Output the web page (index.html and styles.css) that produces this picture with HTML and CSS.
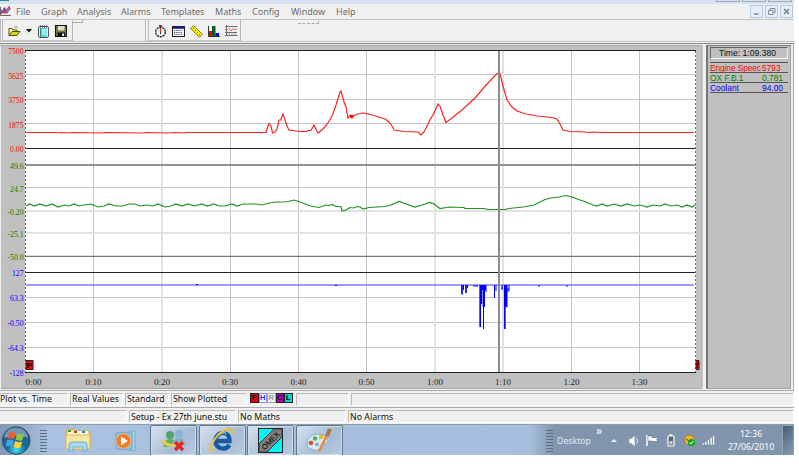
FILE: index.html
```html
<!DOCTYPE html>
<html lang="en">
<head>
    <meta charset="UTF-8">
    <title>Plot vs. Time</title>
    <link rel="stylesheet" href="styles.css">
</head>
<body>
    <div class="screen">
        <div class="titlebar"><i></i><span></span><span></span><span></span></div>
        <div class="menubar">
            <svg class="app-icon" width="12" height="12" viewBox="0 0 12 12">
                <path d="M.5 2V10.500H11" fill="none" stroke="#666"/>
                <path d="M1 9L4 4L5 8L9 2L10 5" fill="none" stroke="#e22" stroke-width="1.300"/>
                <path d="M1 5L3 8L5 3L7 8L10 3" fill="none" stroke="#55c" stroke-width="1.100"/>
            </svg>
            <ul class="menu">
                <li class="m1">File</li>
                <li class="m2">Graph</li>
                <li class="m3">Analysis</li>
                <li class="m4">Alarms</li>
                <li class="m5">Templates</li>
                <li class="m6">Maths</li>
                <li class="m7">Config</li>
                <li class="m8">Window</li>
                <li class="m9">Help</li>
            </ul>
            <div class="win-buttons">
                <svg width="13" height="13" viewBox="0 0 13 13"><path d="M4 9H8.500" stroke="#7d8894" stroke-width="1.500"/></svg>
                <svg width="13" height="13" viewBox="0 0 13 13"><path d="M5 5V3.500H10V7.500H8.500M3.500 5.500H8V9.500H3.500Z" fill="none" stroke="#7d8894"/></svg>
                <svg width="13" height="13" viewBox="0 0 13 13"><path d="M4 4L9 9M9 4L4 9" stroke="#7d8894" stroke-width="1.700"/></svg>
            </div>
        </div>

        <div class="toolbar">
            <div class="tools tools-file">
                <svg width="13" height="13" viewBox="0 0 13 13"><path d="M1 10V3.500H4L5 5H9V6.500" fill="#ffffa0" stroke="#554f10"/><path d="M1 10.500L4 6.500H12L9 10.500Z" fill="#d8d820" stroke="#554f10"/><path d="M6 2.500Q9 .5 10 3" fill="none" stroke="#888"/></svg>
                <svg class="drop" width="6" height="4" viewBox="0 0 6 4"><path d="M0 0H6L3 3.500Z" fill="#111"/></svg>
                <svg width="13" height="13" viewBox="0 0 13 13"><rect x="1.500" y="1.500" width="10" height="11" rx="1.500" fill="#e8f4f4" stroke="#555"/><rect x="3.500" y="3" width="6" height="9" fill="#40d8e0"/><path d="M3 1.500H10" stroke="#333" stroke-dasharray="1 1" stroke-width="2"/><path d="M5 5H9M5 7H8M5 9H9" stroke="#fff"/><path d="M3.500 3V12" stroke="#268a90"/></svg>
                <svg width="12" height="12" viewBox="0 0 12 12"><rect x=".5" y=".5" width="11" height="11" fill="#77782a" stroke="#111"/><rect x="3" y="1" width="6.500" height="4.500" fill="#ddd"/><rect x="2.500" y="7.500" width="7.500" height="4" fill="#111"/><rect x="7" y="8.500" width="2" height="2.500" fill="#ddd"/></svg>
            </div>
            <div class="nub nub-a"></div>
            <div class="tools tools-view">
                <svg width="13" height="13" viewBox="0 0 13 13"><path d="M5 1H8" stroke="#222" stroke-width="1.500"/><circle cx="6.500" cy="7" r="4.800" fill="#f4f4f4" stroke="#222" stroke-width="1.400" stroke-dasharray="2.200 .8"/><path d="M6.500 3V7" stroke="#c33" stroke-width="1.300"/><path d="M6.500 7V9" stroke="#333"/></svg>
                <svg width="13" height="11" viewBox="0 0 13 11"><rect x=".5" y=".5" width="12" height="10" fill="#fff" stroke="#222"/><path d="M1 1.800H12" stroke="#1717a8" stroke-width="2"/><path d="M2 4.500H11M2 6.500H11M2 8.500H11" stroke="#4b4b72" stroke-dasharray="1.300 .9"/></svg>
                <svg width="13" height="13" viewBox="0 0 13 13"><path d="M.7 3.500L3.500.7L12.300 9.300L9.500 12.300Z" fill="#fff000" stroke="#77760a"/><path d="M4 3L3 4M6 5L5 6M8 7L7 8M10 9L9 10" stroke="#77760a"/></svg>
                <svg width="12" height="11" viewBox="0 0 12 11"><path d="M.5 0V10.500H12" fill="none" stroke="#333"/><path d="M1 5H4V10H1Z" fill="#f00"/><path d="M4 0H7.500V10H4Z" fill="#075c20"/><path d="M7.500 7H11V10H7.500Z" fill="#00f"/></svg>
                <svg width="13" height="12" viewBox="0 0 13 12"><path d="M1.500 0V11M0 1.500H12.500M0 4.500H2M0 7.500H12M0 10.500H12.500" stroke="#6b6b6b" fill="none"/><path d="M2 5.500L4 3.500L6 6L8 3.500L10 5L12 3.500" fill="none" stroke="#e46868"/><path d="M3 9H11" stroke="#aaa" stroke-dasharray="2 1"/></svg>
            </div>
            <div class="nub nub-b"></div>
        </div>

        <div class="main">
            <!-- viewBox starts at the top of the graph area -->
            <svg class="graph" width="703" height="345" viewBox="0 44 703 345">
                <rect x="1" y="46" width="701" height="343" fill="#c0c0c0"/>
                <path d="M0 45.500H702V388.500H1" class="edge"/>
                <rect x="25" y="50" width="671" height="323" fill="#fff"/>

                <g class="grid">
                    <path d="M26 74.500H696M26 99.500H696M26 123.500H696M26 187.500H696M26 297.500H696M26 322.500H696M26 347.500H696"/>
                    <path d="M93.500 51V372M230.500 51V372M298.500 51V372M366.500 51V372M571.500 51V372M639.500 51V372"/>
                </g>
                <path class="grid-soft" d="M162 51V372M435 51V372M503 51V372M26 211H696M26 233H696"/>
                <path class="axis" d="M25 50.500H696M25 148.500H696M25 272.500H696M25 372.500H696"/>
                <path class="axis axis-soft" d="M25 165H696"/>
                <path class="axis axis-mid" d="M25 256.300H696"/>
                <path class="marks" d="M25.500 51V372M695.500 51V372"/>

                <polyline class="rpm" points="26,132.500 58,132.500 60,133 64,132.500 69,133 72,132.500 102,133 105,132.500 143,133 146,132.500 168,133 175,132.500 184,133 187,132.500 266,132.500 267,129 269,123.500 271,126 272.500,133 275,132 277,129 278,125 279,120 281,120 282,116 283,114 285,120 287,126 289,130 300,131.500 307,131.500 308,130.500 311,130.500 314,125 316,129 318,133 323,129 328,123 333,114 336,105 340,92 341,91 344,102 346,107 348,118 350,115.500 352,118 354,115.500 358,114 363,113 366,113.500 374,115.500 385,119 389,122 392,126 394,130 404,131.500 418,132 421,135 424,132 430,120 434,113 438,104 440,106 443,115 446,122.500 450,119.500 462,110 475,98 487,84 497,73.500 500,73.500 503,86 507,100 512,107 517,111 526,114 537,116 552,117.500 557,119 560,124 563,130 570,131.500 585,132 589,132.500 592,132 602,132.500 694,132.500"/>
                <path d="M350 114.500L354 115.500V116.500L350 118Z" fill="#f00"/>
                <polyline class="lambda" points="26,206 30,204 34,206 40,204 46,206 52,204 58,207 64,205 69,206 74,204 79,206 84,205 91,204 98,207 104,206 109,204 116,206 123,206 129,204 135,204 140,206 147,205 153,206 158,204 165,207 171,206 176,204 182,206 188,204 194,206 202,204 207,206 214,204 219,206 225,206 232,204 237,206 243,204 250,204 256,204 262,205 269,203 276,202 283,202 288,201.500 294,200 300,202 305,204 311,206 319,207.500 326,205 329,205.500 332,204.500 336,206.500 341,206.500 342,211 346,210 350,207.500 354,208 357,206.500 360,207 363,209 369,207.500 385,206.500 391,205 399,201.500 406,204 415,207 422,205 430,202.500 434,204 440,208.500 449,207 464,207.500 465,208.500 484,208.500 488,209.500 505,209.500 509,208.500 523,207 534,205 540,202 545,199.500 551,198 559,197 566,195.500 572,197 580,200 586,202 593,205 597,206 602,204 607,206 614,204 621,206 627,204 634,206 640,205 647,207 653,205 660,206 665,204 671,206 677,205 682,207 687,205 692,207 695,205"/>
                <path class="coolant" d="M26 285H694"/>
                <g class="drops">
                    <path d="M462 285V294.500M466 285V293M480.200 285V327M504.800 285V329" stroke-width="1.700"/>
                    <path d="M463.500 285V290M467.500 285V288M483.500 285V329M486 285V292M494.500 285V298M496 285V291M502 285V290M509 285V291"/>
                    <path d="M481 285H486V290H485V307H483L482 304H481ZM505 285H507.500V307H505Z" fill="#00f" stroke="none"/>
                    <path d="M196 284.500H198M335 285.500H337M473 286H478M538 286H540M566 286H568M501 288H503M508 288V292"/>
                </g>
                <path d="M482.500 290V305" stroke="#c9c9ff" stroke-width=".7"/>
                <path class="cursor" d="M499 51V372"/>

                <rect x="26" y="360.500" width="7" height="9" fill="#f00" stroke="#222"/>
                <text class="flag" x="26.500" y="368">P</text>
                <path d="M696 360.500H699V369.500H696Z" fill="#f00" stroke="#222"/>
                <path d="M697.500 368V363H699" fill="none" stroke="#200"/>

                <g class="scale red">
                    <text x="23.500" y="54">7500</text>
                    <text x="23.500" y="78.500">5625</text>
                    <text x="23.500" y="103">3750</text>
                    <text x="23.500" y="128">1875</text>
                    <text x="23.500" y="152">0.00</text>
                </g>
                <g class="scale green">
                    <text x="23.500" y="169">49.6</text>
                    <text x="23.500" y="192">24.7</text>
                    <text x="23.500" y="214.500">-0.20</text>
                    <text x="23.500" y="237">-25.1</text>
                    <text x="23.500" y="260">-50.0</text>
                </g>
                <g class="scale blue">
                    <text x="23.500" y="276">127</text>
                    <text x="23.500" y="301">63.3</text>
                    <text x="23.500" y="326">-0.50</text>
                    <text x="23.500" y="351">-64.3</text>
                    <text x="23.500" y="376">-128</text>
                </g>
                <g class="times">
                    <text x="33.500" y="384.500">0:00</text>
                    <text x="93.500" y="384.500">0:10</text>
                    <text x="162" y="384.500">0:20</text>
                    <text x="230" y="384.500">0:30</text>
                    <text x="298.500" y="384.500">0:40</text>
                    <text x="366.500" y="384.500">0:50</text>
                    <text x="435" y="384.500">1:00</text>
                    <text x="503" y="384.500">1:10</text>
                    <text x="571.500" y="384.500">1:20</text>
                    <text x="639.500" y="384.500">1:30</text>
                </g>
            </svg>

            <div class="values">
                <div class="time">Time: 1:09.380</div>
                <div class="row red"><span>Engine Speec</span><b>5793</b></div>
                <div class="row green"><span>OX F.B.1</span><b>0.781</b></div>
                <div class="row blue"><span>Coolant</span><b>94.00</b></div>
            </div>
        </div>

        <div class="status">
            <div class="cell s1">Plot vs. Time</div>
            <div class="cell s2">Real Values</div>
            <div class="cell s3">Standard</div>
            <div class="cell s4">Show Plotted</div>
            <div class="keys"><i class="k-p">P</i><i class="k-h">H</i><i class="k-r">R</i><i class="k-c">C</i><i class="k-l">L</i></div>
            <div class="cell s5"></div>
            <div class="cell s6"></div>
        </div>
        <div class="status status-low">
            <div class="cell t1"></div>
            <div class="cell t2">Setup - Ex 27th june.stu</div>
            <div class="cell t3">No Maths</div>
            <div class="cell t4">No Alarms</div>
        </div>

        <div class="taskbar">
            <svg class="start" width="32" height="31" viewBox="0 0 32 31">
                <defs>
                    <radialGradient id="orb" cx=".5" cy=".85" r=".8">
                        <stop offset="0" stop-color="#3fe0f4"/>
                        <stop offset=".4" stop-color="#1a6f9f"/>
                        <stop offset="1" stop-color="#2c5278"/>
                    </radialGradient>
                </defs>
                <circle cx="16.200" cy="15.500" r="13.800" fill="url(#orb)" stroke="#294e70"/>
                <path d="M4 13Q5 3 16 2.500Q27 3 28 13Q16 8 4 13Z" fill="#b5cbdc" opacity=".55"/>
                <path d="M9 8Q12 6 15.500 8L14 14Q11 12.500 7.500 14Z" fill="#f0602a"/>
                <path d="M17 8.500Q20 10.500 24 8.500L22.500 15Q19 16.500 15.500 14.500Z" fill="#8cc63e"/>
                <path d="M7 15.500Q10 13.500 13.700 15.500L12 21.500Q9 20 5.700 21.500Z" fill="#4aa0e8"/>
                <path d="M15.200 16Q18.500 18 22 16.500L20.500 22.500Q17 24 13.500 22Z" fill="#ffd034"/>
            </svg>
            <div class="grip"></div>
            <svg class="explorer" width="26" height="25" viewBox="0 0 26 25">
                <path d="M1 3L2 1H9L10 3H24L25 5V19H1Z" fill="#ead47e" stroke="#c9aa50"/>
                <path d="M3 3H23V8H3Z" fill="#fff6cc"/>
                <path d="M3 3H6" stroke="#2a9a3a" stroke-width="2"/><path d="M9 4H12" stroke="#d8362c" stroke-width="2"/><path d="M17 4H20" stroke="#3279cc" stroke-width="2"/>
                <path d="M1 7H25V21H1Z" fill="#f7e7a0" stroke="#d5ba63"/>
                <path d="M4 23V17Q4 14 7 14H19Q22 14 22 17V23H18V19H8V23Z" fill="#a7d9f2" stroke="#6eabcf"/>
            </svg>
            <svg class="player" width="24" height="22" viewBox="0 0 24 22">
                <path d="M6 3L20 1V21L6 19Z" fill="#a9d2e9" stroke="#7bb0cf"/>
                <path d="M1 3H17V19H1Z" fill="#8ec4e4" stroke="#69a4c9"/>
                <circle cx="8.500" cy="11" r="7.300" fill="#f27a20" stroke="#f5b27c"/>
                <path d="M6 6.500L13 11L6 15.500Z" fill="#fff"/>
            </svg>
            <div class="task">
                <svg width="26" height="24" viewBox="0 0 26 24">
                    <circle cx="9" cy="6" r="4" fill="#54a565"/><path d="M3 18Q2 10 9 10Q16 10 15 18Z" fill="#65b15f"/>
                    <circle cx="18" cy="5" r="4" fill="#83b5d4"/><path d="M12 17Q11 9 18 9Q25 9 24 17Z" fill="#82b1d0"/>
                    <path d="M1 11Q9 21 23 13" fill="none" stroke="#e8c756" stroke-width="3"/>
                    <path d="M14 13L22 21M22 13L14 21" stroke="#df2626" stroke-width="3.200"/>
                </svg>
            </div>
            <div class="task">
                <svg width="26" height="25" viewBox="0 0 26 25">
                    <path d="M20.500 17Q17 22 11 20Q5 17 6.500 11Q9 4.500 15 5Q21 6 20.500 13H8" fill="none" stroke="#165aa7" stroke-width="4.300"/>
                    <path d="M8 8Q12 3 17 5.500" fill="none" stroke="#56b7ef" stroke-width="1.800"/>
                    <path d="M5 22Q-1 25 3 16Q8 5 19 1Q25 0 22 7" fill="none" stroke="#edbe35" stroke-width="2"/>
                </svg>
            </div>
            <div class="task">
                <svg width="25" height="25" viewBox="0 0 25 25">
                    <rect x=".5" y=".5" width="24" height="24" fill="#00f4fa" stroke="#222"/>
                    <path d="M1 16L16 1H24V9L9 24H1Z" fill="#808080" stroke="#333"/>
                    <text class="omex" x="-11" y="3" transform="translate(12.500 12.500) rotate(-45)" textLength="22" lengthAdjust="spacingAndGlyphs">OMEX</text>
                </svg>
            </div>
            <div class="task">
                <svg width="26" height="25" viewBox="0 0 26 25">
                    <path d="M1 16Q1 7 11 6Q20 6 22 13Q21 16 17 16Q14 17 16 20Q15 23 9 22Q1 21 1 16Z" fill="#d8e9f4" stroke="#86abc5"/>
                    <circle cx="5" cy="15" r="2.300" fill="#d84b3a"/><circle cx="9" cy="10.500" r="2.200" fill="#4ab558"/><circle cx="15" cy="9" r="2.200" fill="#e8b82b"/><circle cx="11" cy="16.500" r="1.800" fill="#6eaadb"/>
                    <path d="M13 23L21 7" stroke="#e28b32" stroke-width="2.500"/><path d="M21 8L24 1" stroke="#a9764b" stroke-width="4"/>
                </svg>
            </div>
            <div class="tray">
                <div class="grip"></div>
                <span class="desktop">Desktop</span>
                <span class="more">»</span>
                <svg class="icons" width="105" height="16" viewBox="0 0 105 16">
                    <path d="M1 9L4 6L7 9Z" fill="#eef3f8"/>
                    <path d="M19.500 6H21.500L24.500 3V13L21.500 10H19.500Z" fill="#fff" stroke="#dfe5ec" stroke-width=".5"/>
                    <path d="M26.500 5Q29 8 26.500 11" fill="none" stroke="#d4dde8"/>
                    <path d="M37 2V13" stroke="#fff" stroke-width="1.500"/><path d="M38 3H42V4.500H48.500L46.500 6.500L48 8.500H42V8H38Z" fill="#fff" stroke="#4a596b" stroke-width=".5"/>
                    <rect x="58" y="3" width="6" height="10" rx="1" fill="#59687a" stroke="#fff" stroke-width="1.200"/><path d="M59.500 2H62.500" stroke="#fff" stroke-width="1.500"/><path d="M61 8V11.500" stroke="#c0cbd6" stroke-width="3"/>
                    <circle cx="79.500" cy="7" r="5" fill="#f3b520" stroke="#9c7820" stroke-width=".7"/><path d="M76 6L79 8L82 6" stroke="#604918" fill="none"/><circle cx="81.500" cy="9.500" r="3.600" fill="#12a52a"/><path d="M79.500 9.500L81 11L83.500 8" fill="none" stroke="#fff"/>
                    <path d="M92 10H94V12H92ZM94.700 8.500H96.700V12H94.700ZM97.400 6.500H99.400V12H97.400ZM100.100 4.500H102.100V12H100.100ZM102.600 2.500H104.600V12H102.600Z" fill="#f5f8fb" stroke="#6d7b8c" stroke-width=".4"/>
                </svg>
                <div class="clock">12:36<br>27/06/2010</div>
                <div class="peek"></div>
            </div>
        </div>
    </div>
</body>
</html>
```

FILE: styles.css
```css
* {
    box-sizing: border-box;
}
body {
    margin: 0;
    background: #fff;
    font-family: "Noto Sans", "Open Sans", sans-serif;
    overflow: hidden;
}
.screen {
    width: 794px;
    height: 455px;
    background: #f0f0f0;
}
svg {
    display: block;
    flex: none;
}
.red { color: #f00; fill: #f00; }
.green { color: #008000; fill: #008000; }
.blue { color: #00f; fill: #00f; }

/* title and menu */
.titlebar {
    display: flex;
    height: 4px;
    padding-right: 2px;
    background: #d5e1ef;
}
.titlebar i {
    width: 9px;
    height: 1px;
    margin-right: auto;
    background: #27898c;
}
.titlebar span {
    width: 24px;
    height: 2px;
    margin-left: 2px;
    border: 1px solid #9ca9b8;
    border-top: 0;
}
.menubar {
    display: flex;
    height: 16px;
    padding-top: 1px;
    border-bottom: 1px solid #c4c4c4;
}
.menu {
    display: flex;
    margin: 0;
    padding: 0 0 0 4px;
    list-style: none;
    font-size: 9px;
    line-height: 13px;
    color: #6e6e6e;
    white-space: nowrap;
}
.m1 { width: 25px; }
.m2 { width: 36px; }
.m3 { width: 44px; }
.m4 { width: 40px; }
.m5 { width: 54px; }
.m6 { width: 37px; }
.m7 { width: 39px; }
.m8 { width: 45px; }
.win-buttons {
    display: flex;
    gap: 2px;
    margin-left: auto;
    padding-right: 1px;
}
.win-buttons svg {
    outline: 1px solid #b5c7dc;
    outline-offset: -1px;
    background: #e6eef7;
}

.toolbar {
    display: flex;
    height: 24px;
    border-bottom: 1px solid #808080;
    box-shadow: inset 0 -1px #f5f5f5, inset 0 -2px #bdbdbd;
}
.tools {
    display: flex;
    align-items: center;
    height: 21px;
    padding-top: 2px;
    border-right: 1px solid #b5b5b5;
    border-bottom: 1px solid #c8c8c8;
}
.tools-file {
    width: 73px;
    gap: 5px;
    padding-left: 5px;
    border-left: 3px double #bbb;
}
.tools-view {
    width: 96px;
    gap: 5px;
    margin-left: 62px;
    padding-left: 5px;
    border-left: 4px double #bbb;
}
.nub {
    width: 10px;
    height: 3px;
    border-bottom: 1px solid #aaa;
    border-right: 1px solid #bbb;
}
.nub-b {
    width: 21px;
    height: 4px;
    margin-left: 57px;
    border-bottom-style: dashed;
}

/* graph */
.main {
    display: flex;
    height: 346px;
    border-right: 1px solid #aaa;
}
.edge { fill: none; stroke: #a8a8a8; }
.grid { stroke: #c4c4c4; }
.grid-soft { stroke: #e2e2e2; stroke-width: 2; }
.axis { stroke: #222; }
.axis-soft { stroke: #939393; stroke-width: 2; }
.axis-mid { stroke: #555; }
.marks { stroke: #e33; stroke-dasharray: 2 2; }
.rpm, .lambda, .drops { fill: none; }
.rpm { stroke: #f22; stroke-width: 1.2; }
.lambda { stroke: #209020; stroke-width: 1.2; }
.coolant { stroke: #7777ff; stroke-width: 1.4; }
.drops { stroke: #00f; }
.cursor { stroke: #8c8c8c; stroke-width: 2; }
.scale text {
    font: 7.7px "Liberation Serif", serif;
    text-anchor: end;
}
.times text {
    font: 9px "Liberation Serif", serif;
    text-anchor: middle;
    fill: #222;
}
.flag {
    font: bold 8px "Liberation Sans", sans-serif;
}

.values {
    width: 85px;
    height: 344px;
    margin: 1px 0 0 3px;
    padding: 1px 2px 0 2px;
    border: 1px solid #a0a0a0;
    border-left: 2px solid #777;
    border-top: 1px solid #777;
    background: #c0c0c0;
    font: 8.4px/10px "Liberation Sans", sans-serif;
}
.time {
    height: 12px;
    margin-bottom: 3px;
    border: 1px solid #eee;
    border-top-color: #666;
    border-left-color: #666;
    padding-right: 3px;
    text-align: center;
    color: #111;
    font-size: 8.6px;
}
.row {
    display: flex;
    height: 10px;
    border-bottom: 1px solid #555;
    white-space: nowrap;
}
.row:nth-child(2) {
    border-top: 1px solid #555;
    height: 11px;
}
.row span {
    width: 52px;
    flex: none;
}
.row.red span {
    letter-spacing: -0.1px;
}
.row b {
    font-weight: normal;
}

/* status bars */
.status {
    display: flex;
    height: 17px;
    gap: 2px;
    padding-top: 2px;
    border-top: 1px solid #aaa;
    font-size: 8.8px;
    line-height: 13px;
    color: #111;
    white-space: nowrap;
}
.cell {
    height: 13px;
    padding-left: 1px;
    border: 1px solid #bbb;
    border-right-color: #fff;
    border-bottom-color: #fff;
    line-height: 11px;
}
.s1 { width: 68px; padding: 0; border-left: 0; }
.s2 { width: 53px; }
.s3 { width: 44px; }
.s4 { width: 76px; }
.s5 { width: 53px; margin-left: 1px; }
.s6 { flex: 1; }
.keys {
    display: flex;
    padding-left: 1px;
}
.keys i {
    width: 8.5px;
    height: 10px;
    border: 1px solid #222;
    font: bold 7.5px/8px "Liberation Sans", sans-serif;
    text-align: center;
}
.k-p { background: #e00; color: #000; }
.keys .k-h { background: #fff; color: #22f; border-color: #88f; }
.keys .k-r { background: #eee; color: #999; border-color: #aaa; }
.k-c { background: #c000c0; color: #000; }
.k-l { background: #00d8d8; color: #000; }
.t1 { width: 127px; border-left: 0; }
.t2 { width: 107px; letter-spacing: -0.05px; }
.t2, .t3, .t4, .t1 { line-height: 12px; }
.t3 { width: 108px; }
.t4 { flex: 1; }

/* windows taskbar */
.taskbar {
    display: flex;
    align-items: center;
    height: 32px;
    background: linear-gradient(90deg, #8298b3, #a9c1df 50px, #a6bfdc 530px, #8196ae 555px, #8095ad);
    border-top: 1px solid #8e9caa;
}
.grip {
    width: 7px;
    height: 24px;
    background: radial-gradient(circle, #53677f 0.8px, transparent 1px) 0 0 / 2.5px 3px;
}
.start { margin-right: 8px; }
.explorer { margin-left: 18px; }
.player { margin: 0 11px 0 24px; }
.task {
    display: flex;
    align-items: center;
    justify-content: center;
    width: 47px;
    height: 31px;
    margin-right: 1.5px;
    border: 1px solid #61768f;
    border-radius: 2px;
    background: linear-gradient(135deg, #d6e1ee, #a7bcd5 60%, #b8cbe0);
    box-shadow: inset 0 0 0 1px #cedbea;
}
.omex {
    font: 8px "Liberation Sans", sans-serif;
}
.tray {
    display: flex;
    align-items: center;
    height: 31px;
    margin-left: auto;
    color: #fff;
    font-size: 8.7px;
}
.desktop {
    margin-left: 4px;
    color: #e0e7ef;
}
.more {
    margin: -21px 8px 0 5px;
    font-size: 12px;
}
.icons {
    margin-right: 12px;
}
.clock {
    width: 48px;
    line-height: 13px;
    text-align: center;
}
.peek {
    width: 12px;
    height: 31px;
    margin-left: 7px;
    border: 1px solid #90a2b6;
    background: linear-gradient(135deg, #475c73, #8a9eb5);
}
```
